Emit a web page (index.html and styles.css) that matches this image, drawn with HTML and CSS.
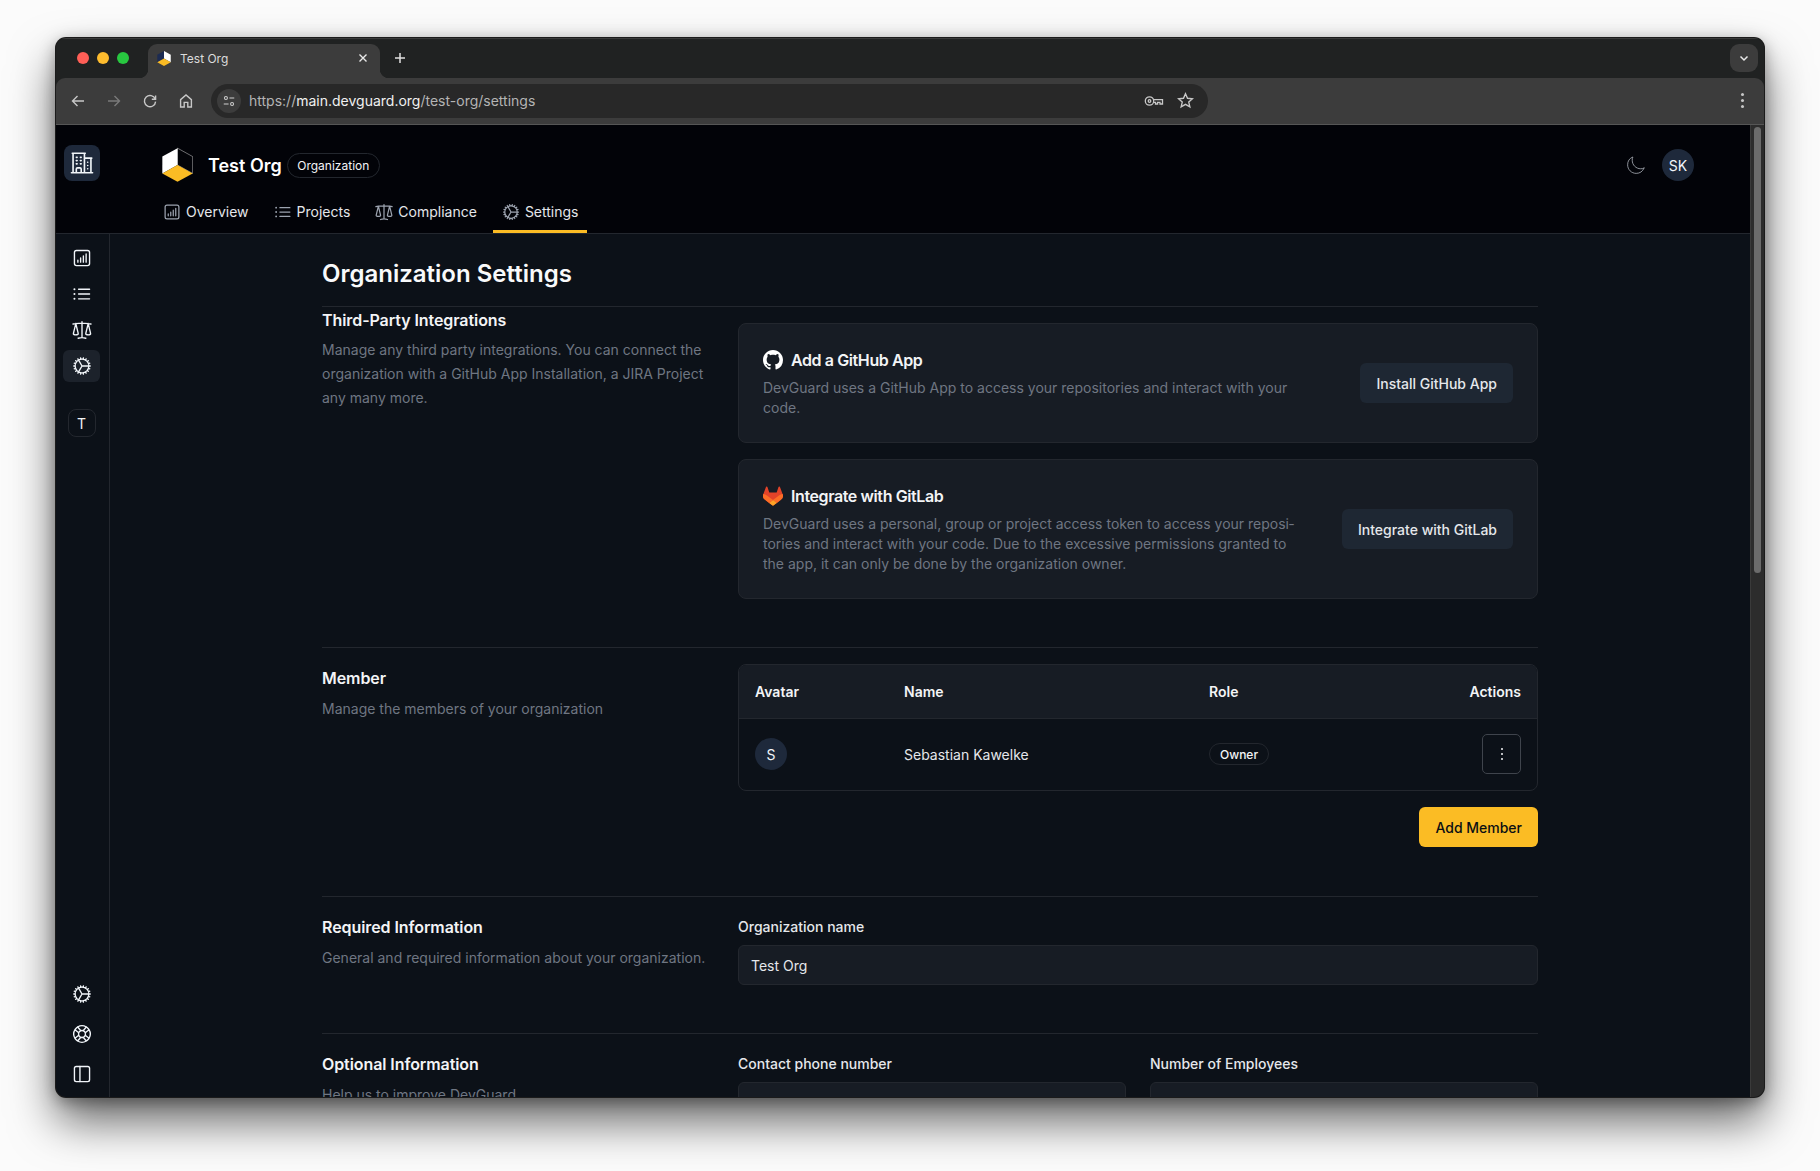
FILE: index.html
```html
<!DOCTYPE html>
<html lang="en">
<head>
<meta charset="utf-8">
<title>Test Org</title>
<link rel="stylesheet" href="styles.css">
</head>
<body>
<svg class="sprites" width="0" height="0" aria-hidden="true">
  <symbol id="i-chart" viewBox="0 0 24 24"><path d="M7.5 14.25v2.25m3-4.5v4.5m3-6.75v6.75m3-9v9M6 20.25h12A2.25 2.25 0 0 0 20.25 18V6A2.25 2.25 0 0 0 18 3.75H6A2.25 2.25 0 0 0 3.75 6v12A2.25 2.25 0 0 0 6 20.25Z"/></symbol>
  <symbol id="i-list" viewBox="0 0 24 24"><path d="M8.25 6.75h12M8.25 12h12m-12 5.25h12M3.75 6.75h.007v.008H3.75V6.75Zm.375 0a.375.375 0 1 1-.75 0 .375.375 0 0 1 .75 0ZM3.75 12h.007v.008H3.75V12Zm.375 0a.375.375 0 1 1-.75 0 .375.375 0 0 1 .75 0Zm-.375 5.25h.007v.008H3.75v-.008Zm.375 0a.375.375 0 1 1-.75 0 .375.375 0 0 1 .75 0Z"/></symbol>
  <symbol id="i-scale" viewBox="0 0 24 24"><path d="M12 3v17.25m0 0c-1.472 0-2.882.265-4.185.75M12 20.25c1.472 0 2.882.265 4.185.75M18.75 4.97A48.416 48.416 0 0 0 12 4.5c-2.291 0-4.545.16-6.75.47m13.5 0c1.01.143 2.01.317 3 .52m-3-.52 2.62 10.726c.122.499-.106 1.028-.589 1.202a5.988 5.988 0 0 1-2.031.352 5.988 5.988 0 0 1-2.031-.352c-.483-.174-.711-.703-.59-1.202L18.75 4.971Zm-16.5.52c.99-.203 1.99-.377 3-.52m0 0 2.62 10.726c.122.499-.106 1.028-.589 1.202a5.989 5.989 0 0 1-2.031.352 5.989 5.989 0 0 1-2.031-.352c-.483-.174-.711-.703-.59-1.202L5.25 4.971Z"/></symbol>
  <symbol id="i-cog" viewBox="0 0 24 24"><path d="M4.5 12a7.5 7.5 0 0 0 15 0m-15 0a7.5 7.5 0 1 1 15 0m-15 0H3m16.5 0H21m-1.5 0H12m-8.457 3.077 1.41-.513m14.095-5.13 1.41-.513M5.106 17.785l1.15-.964m11.49-9.642 1.149-.964M7.501 19.795l.75-1.3m7.5-12.99.75-1.3m-6.063 16.658.26-1.477m2.605-14.772.26-1.477m0 17.726-.26-1.477M10.698 4.614l-.26-1.477M16.5 19.794l-.75-1.299M7.5 4.205 12 12m6.894 5.785-1.149-.964M6.256 7.178l-1.15-.964m15.352 8.864-1.41-.513M4.954 9.435l-1.41-.514M12.002 12l-3.75 6.495"/></symbol>
  <symbol id="i-building" viewBox="0 0 24 24"><path d="M2.25 21h19.5m-18-18v18m10.5-18v18m6-13.5V21M6.75 6.75h.75m-.75 3h.75m-.75 3h.75m3-6h.75m-.75 3h.75m-.75 3h.75M6.75 21v-3.375c0-.621.504-1.125 1.125-1.125h2.25c.621 0 1.125.504 1.125 1.125V21M3 3h12m-.75 4.5H21m-3.75 3.75h.008v.008h-.008v-.008Zm0 3h.008v.008h-.008v-.008Zm0 3h.008v.008h-.008v-.008Z"/></symbol>
  <symbol id="i-moon" viewBox="0 0 24 24"><path d="M21.752 15.002A9.72 9.72 0 0 1 18 15.75c-5.385 0-9.75-4.365-9.75-9.75 0-1.33.266-2.597.748-3.752A9.753 9.753 0 0 0 3 11.25C3 16.635 7.365 21 12.75 21a9.753 9.753 0 0 0 9.002-5.998Z"/></symbol>
  <symbol id="i-buoy" viewBox="0 0 24 24"><path d="M16.712 4.33a9.027 9.027 0 0 1 1.652 1.306c.51.51.944 1.064 1.306 1.652M16.712 4.33l-3.448 4.138m3.448-4.138a9.014 9.014 0 0 0-9.424 0M19.67 7.288l-4.138 3.448m4.138-3.448a9.014 9.014 0 0 1 0 9.424m-4.138-5.976a3.736 3.736 0 0 0-.88-1.388 3.737 3.737 0 0 0-1.388-.88m2.268 2.268a3.765 3.765 0 0 1 0 2.528m-2.268-4.796a3.765 3.765 0 0 0-2.528 0m4.796 4.796c-.181.506-.475.982-.88 1.388a3.736 3.736 0 0 1-1.388.88m2.268-2.268 4.138 3.448m0 0a9.027 9.027 0 0 1-1.306 1.652c-.51.51-1.064.944-1.652 1.306m0 0-3.448-4.138m3.448 4.138a9.014 9.014 0 0 1-9.424 0m5.976-4.138a3.765 3.765 0 0 1-2.528 0m0 0a3.736 3.736 0 0 1-1.388-.88 3.737 3.737 0 0 1-.88-1.388m2.268 2.268L7.288 19.67m0 0a9.024 9.024 0 0 1-1.652-1.306 9.027 9.027 0 0 1-1.306-1.652m0 0 4.138-3.448M4.33 16.712a9.014 9.014 0 0 1 0-9.424m4.138 5.976a3.765 3.765 0 0 1 0-2.528m0 0c.181-.506.475-.982.88-1.388a3.736 3.736 0 0 1 1.388-.88m-2.268 2.268L4.33 7.288m6.406 1.18L7.288 4.33m0 0a9.024 9.024 0 0 0-1.652 1.306A9.025 9.025 0 0 0 4.33 7.288"/></symbol>
  <symbol id="i-panel" viewBox="0 0 24 24"><rect x="3.75" y="3.75" width="16.5" height="16.5" rx="2"/><path d="M9.75 3.75v16.5"/></symbol>
</svg>

<div class="window">
  <div class="tabstrip">
    <div class="lights"><span class="light red"></span><span class="light amber"></span><span class="light green"></span></div>
    <div class="tab">
      <svg class="favicon" viewBox="0 0 90 100"><polygon points="45,0 90,25 90,75 45,50" fill="#fff"/><polygon points="45,0 0,25 0,75 45,50" fill="#1c2b52"/><polygon points="45,50 0,75 45,100 90,75" fill="#fbbc24"/></svg>
      <span class="tab-title">Test Org</span>
      <svg class="tab-close" viewBox="0 0 10 10"><path d="M1.5 1.5l7 7m0-7l-7 7"/></svg>
    </div>
    <svg class="tab-new" viewBox="0 0 12 12"><path d="M6 1v10M1 6h10"/></svg>
    <div class="tab-list"><svg viewBox="0 0 10 10"><path d="M1.5 3.5L5 7l3.5-3.5"/></svg></div>
  </div>
  <div class="toolbar">
    <svg class="tb-icon" viewBox="0 0 16 16"><path d="M14 8H2.5M7.5 3L2.5 8l5 5"/></svg>
    <svg class="tb-icon dim" viewBox="0 0 16 16"><path d="M2 8h11.5M8.5 3l5 5-5 5"/></svg>
    <svg class="tb-icon" viewBox="0 0 16 16"><path d="M13.2 6A5.6 5.6 0 1 0 13.6 8.6M13.6 2.4V6.2H9.8"/></svg>
    <svg class="tb-icon" viewBox="0 0 16 16"><path d="M2.6 14V6.6L8 2l5.4 4.6V14H9.8V9.4H6.2V14Z"/></svg>
    <div class="omnibox">
      <span class="site-info"><svg viewBox="0 0 16 16"><circle cx="4.5" cy="4.5" r="1.7"/><path d="M8.5 4.5H14M2 11.5h5.5"/><circle cx="11.5" cy="11.5" r="1.7"/></svg></span>
      <span class="url"><span class="url-dim">https://</span>main.devguard.org<span class="url-dim">/test-org/settings</span></span>
      <svg class="omni-icon key" viewBox="0 0 20 14"><circle cx="5.5" cy="7" r="4.2"/><circle cx="5.5" cy="7" r="1.3"/><path d="M9.7 5.6H18.5V10H16V8.4H13.6V10H11.5V8.4H9.7"/></svg>
      <svg class="omni-icon star" viewBox="0 0 16 16"><path d="M8 1.6l1.9 4.3 4.7.45-3.55 3.1 1.05 4.6L8 11.65 3.9 14.05l1.05-4.6L1.4 6.35l4.7-.45Z"/></svg>
    </div>
    <div class="tb-menu"><span></span><span></span><span></span></div>
  </div>

  <div class="viewport">
    <div class="app">
      <header class="app-header">
        <div class="org-slot"><span class="org-switch"><svg class="ic ic-26"><use href="#i-building"/></svg></span></div>
        <div class="head-main">
          <div class="head-top">
            <svg class="logo" viewBox="-1 -1 92 102"><polygon points="45,0 90,25 90,75 45,50" fill="none" stroke="#d8d8d8" stroke-width="1.5"/><polygon points="45,0 0,25 0,75 45,50" fill="#fff"/><polygon points="45,50 0,75 45,100 90,75" fill="#fbbc24"/></svg>
            <span class="org-name">Test Org</span>
            <span class="pill pill-org">Organization</span>
            <div class="head-actions">
              <svg class="ic ic-moon"><use href="#i-moon"/></svg>
              <span class="avatar avatar-sk">SK</span>
            </div>
          </div>
          <nav class="tabs">
            <a class="nav-tab"><svg class="ic ic-20"><use href="#i-chart"/></svg>Overview</a>
            <a class="nav-tab"><svg class="ic ic-20"><use href="#i-list"/></svg>Projects</a>
            <a class="nav-tab"><svg class="ic ic-20"><use href="#i-scale"/></svg>Compliance</a>
            <a class="nav-tab active"><svg class="ic ic-20"><use href="#i-cog"/></svg>Settings</a>
          </nav>
        </div>
      </header>

      <div class="app-body">
        <aside class="sidebar">
          <div class="side-group">
            <span class="side-item"><svg class="ic ic-22"><use href="#i-chart"/></svg></span>
            <span class="side-item"><svg class="ic ic-22"><use href="#i-list"/></svg></span>
            <span class="side-item"><svg class="ic ic-22"><use href="#i-scale"/></svg></span>
            <span class="side-item active"><svg class="ic ic-22"><use href="#i-cog"/></svg></span>
            <span class="side-t">T</span>
          </div>
          <div class="side-group side-bottom">
            <span class="side-item"><svg class="ic ic-22"><use href="#i-cog"/></svg></span>
            <span class="side-item"><svg class="ic ic-22"><use href="#i-buoy"/></svg></span>
            <span class="side-item"><svg class="ic ic-22"><use href="#i-panel"/></svg></span>
          </div>
        </aside>

        <main class="content">
          <h1 class="page-title">Organization Settings</h1>

          <section class="section section-first">
            <div class="sec-info">
              <h2 class="sec-title">Third-Party Integrations</h2>
              <p class="sec-desc">Manage any third party integrations. You can connect the organization with a GitHub App Installation, a JIRA Project any many more.</p>
            </div>
            <div class="sec-body stack">
              <div class="card">
                <div class="card-text">
                  <h3 class="card-title"><svg class="brand" viewBox="0 0 16 16"><path fill="#fff" d="M8 0C3.58 0 0 3.58 0 8c0 3.54 2.29 6.53 5.47 7.59.4.07.55-.17.55-.38 0-.19-.01-.82-.01-1.49-2.01.37-2.53-.49-2.69-.94-.09-.23-.48-.94-.82-1.13-.28-.15-.68-.52-.01-.53.63-.01 1.08.58 1.23.82.72 1.21 1.87.87 2.33.66.07-.52.28-.87.51-1.07-1.78-.2-3.64-.89-3.64-3.95 0-.87.31-1.59.82-2.15-.08-.2-.36-1.02.08-2.12 0 0 .67-.21 2.2.82.64-.18 1.32-.27 2-.27.68 0 1.36.09 2 .27 1.53-1.04 2.2-.82 2.2-.82.44 1.1.16 1.92.08 2.12.51.56.82 1.27.82 2.15 0 3.07-1.87 3.75-3.65 3.95.29.25.54.73.54 1.48 0 1.07-.01 1.93-.01 2.2 0 .21.15.46.55.38A8.013 8.013 0 0016 8c0-4.42-3.58-8-8-8z"/></svg>Add a GitHub App</h3>
                  <p class="card-desc">DevGuard uses a GitHub App to access your repositories and interact with your code.</p>
                </div>
                <button class="btn btn-muted">Install GitHub App</button>
              </div>
              <div class="card">
                <div class="card-text">
                  <h3 class="card-title"><svg class="brand" viewBox="0 0 25 24"><path fill="#E24329" d="M24.507 9.5l-.034-.09L21.082.562a.896.896 0 00-1.694.091l-2.29 7.01H7.825L5.535.653a.898.898 0 00-1.694-.09L.451 9.411.416 9.5a6.297 6.297 0 002.09 7.278l.012.01.03.022 5.16 3.867 2.56 1.935 1.554 1.176a1.051 1.051 0 001.268 0l1.555-1.176 2.56-1.935 5.197-3.89.014-.01A6.297 6.297 0 0024.507 9.5z"/><path fill="#FC6D26" d="M24.507 9.5l-.034-.09a11.44 11.44 0 00-4.56 2.051l-7.447 5.632 4.742 3.584 5.197-3.89.014-.01A6.297 6.297 0 0024.507 9.5z"/><path fill="#FCA326" d="M7.707 20.677l2.56 1.935 1.555 1.176a1.051 1.051 0 001.268 0l1.555-1.176 2.56-1.935-4.743-3.584-4.755 3.584z"/><path fill="#FC6D26" d="M5.01 11.461a11.43 11.43 0 00-4.56-2.05L.416 9.5a6.297 6.297 0 002.09 7.278l.012.01.03.022 5.16 3.867 4.745-3.584-7.444-5.632z"/></svg>Integrate with GitLab</h3>
                  <p class="card-desc">DevGuard uses a personal, group or project access token to access your reposi&shy;tories and interact with your code. Due to the excessive permissions granted to the app, it can only be done by the organization owner.</p>
                </div>
                <button class="btn btn-muted">Integrate with GitLab</button>
              </div>
            </div>
          </section>

          <section class="section">
            <div class="sec-info">
              <h2 class="sec-title">Member</h2>
              <p class="sec-desc">Manage the members of your organization</p>
            </div>
            <div class="sec-body">
              <div class="table-wrap">
                <table class="members">
                  <colgroup><col class="col-avatar"><col class="col-name"><col class="col-role"><col class="col-actions"></colgroup>
                  <thead><tr><th>Avatar</th><th>Name</th><th>Role</th><th class="right">Actions</th></tr></thead>
                  <tbody><tr>
                    <td><span class="avatar avatar-s">S</span></td>
                    <td>Sebastian Kawelke</td>
                    <td><span class="pill pill-owner">Owner</span></td>
                    <td class="right"><button class="btn-dots"><svg viewBox="0 0 4 14"><circle cx="2" cy="2" r="1"/><circle cx="2" cy="7" r="1"/><circle cx="2" cy="12" r="1"/></svg></button></td>
                  </tr></tbody>
                </table>
              </div>
              <div class="row-end"><button class="btn btn-primary">Add Member</button></div>
            </div>
          </section>

          <section class="section">
            <div class="sec-info">
              <h2 class="sec-title">Required Information</h2>
              <p class="sec-desc">General and required information about your organization.</p>
            </div>
            <div class="sec-body">
              <label class="field"><span class="field-label">Organization name</span><span class="input">Test Org</span></label>
            </div>
          </section>

          <section class="section">
            <div class="sec-info">
              <h2 class="sec-title">Optional Information</h2>
              <p class="sec-desc">Help us to improve DevGuard.</p>
            </div>
            <div class="sec-body two-col">
              <label class="field"><span class="field-label">Contact phone number</span><span class="input placeholder">+49 123 456 789</span></label>
              <label class="field"><span class="field-label">Number of Employees</span><span class="input"></span></label>
            </div>
          </section>
        </main>
      </div>
    </div>
    <div class="scrollbar"><span class="thumb"></span></div>
  </div>
</div>
</body>
</html>
```
FILE: styles.css
```css
* { box-sizing: border-box; }
html, body { margin: 0; height: 100%; }
body {
  height: 1171px;
  overflow: hidden;
  padding: 38px 56px 74px;
  background: #fbfbfb;
  font-family: Inter, "Liberation Sans", sans-serif;
  font-size: 14px;
  color: #f3f4f6;
}
.sprites { position: absolute; }
h1, h2, h3, p { margin: 0; }
button { font: inherit; border: 0; }

.window {
  height: 1059px;
  display: flex;
  flex-direction: column;
  border-radius: 10px;
  overflow: hidden;
  background: #202222;
  box-shadow: 0 0 0 1px #1b1b1b, 0 24px 46px rgba(0,0,0,.6), 0 4px 16px rgba(0,0,0,.35);
}

/* browser chrome */
.tabstrip {
  height: 40px;
  flex: none;
  display: flex;
  align-items: flex-end;
  background: #202222;
  border-top: 1px solid #3a3a3a;
}
.lights { display: flex; gap: 8px; width: 92px; padding: 0 0 14px 21px; flex: none; }
.light { width: 12px; height: 12px; border-radius: 50%; }
.red { background: #ff5f57; }
.amber { background: #febc2e; }
.green { background: #28c840; }
.tab {
  position: relative;
  width: 232px;
  height: 34px;
  flex: none;
  display: flex;
  align-items: center;
  padding: 0 12px 6px 9px;
  background: #3c3c3c;
  border-radius: 9px 9px 0 0;
  font-size: 12px;
  color: #dcdcdc;
}
.tab::before, .tab::after {
  content: "";
  position: absolute;
  bottom: 0;
  width: 9px;
  height: 9px;
}
.tab::before { left: -9px; background: radial-gradient(circle at 0 0, transparent 9px, #3c3c3c 9.5px); }
.tab::after { right: -9px; background: radial-gradient(circle at 100% 0, transparent 9px, #3c3c3c 9.5px); }
.favicon { width: 14px; height: 15px; flex: none; }
.tab-title { margin-left: 9px; flex: 1; }
.tab-close { width: 10px; height: 10px; fill: none; stroke: #e8e8e8; stroke-width: 1.4; }
.tab-new { width: 12px; height: 12px; margin: 0 0 14px 14px; fill: none; stroke: #e0e0e0; stroke-width: 1.5; flex: none; }
.tab-list {
  margin: 0 6px 6px auto;
  width: 28px;
  height: 28px;
  display: flex;
  align-items: center;
  justify-content: center;
  background: #3c3c3c;
  border-radius: 9px;
}
.tab-list svg { width: 10px; height: 10px; fill: none; stroke: #e8e8e8; stroke-width: 1.5; }

.toolbar {
  height: 47px;
  flex: none;
  display: flex;
  align-items: center;
  padding: 0 0 1px 14px;
  background: #3c3c3c;
  border-bottom: 1px solid #565656;
  border-radius: 9px 9px 0 0;
}
.tb-icon { width: 16px; height: 16px; flex: none; margin-right: 20px; fill: none; stroke: #c7c7c7; stroke-width: 1.4; }
.tb-icon.dim { stroke: #7a7a7a; }
.tb-icon:nth-of-type(4) { margin-right: 17px; }
.omnibox {
  width: 997px;
  height: 34px;
  display: flex;
  align-items: center;
  background: #282828;
  border-radius: 17px;
  padding: 0 14px 0 6px;
}
.site-info {
  width: 24px;
  height: 24px;
  display: flex;
  align-items: center;
  justify-content: center;
  background: #3c3c3c;
  border-radius: 50%;
  flex: none;
}
.site-info svg { width: 14px; height: 14px; fill: none; stroke: #cfcfcf; stroke-width: 1.2; }
.url { margin-left: 8px; flex: 1; font-size: 14px; color: #f0f0f0; }
.url-dim { color: #b4b4b4; }
.omni-icon { fill: none; stroke: #c7c7c7; stroke-width: 1.3; flex: none; }
.key { width: 20px; height: 14px; margin-right: 13px; }
.star { width: 17px; height: 17px; }
.tb-menu { margin-left: auto; margin-right: 20px; display: flex; flex-direction: column; gap: 3px; }
.tb-menu span { width: 3px; height: 3px; border-radius: 50%; background: #c7c7c7; }

/* viewport */
.viewport { flex: 1; min-height: 0; display: flex; }
.scrollbar {
  width: 14px;
  flex: none;
  padding: 2px 3px;
  background: #2c2c2c;
  border-left: 1px solid #3a3a3a;
}
.thumb { display: block; height: 446px; border-radius: 4px; background: #6b6b6b; }
.app { flex: 1; min-width: 0; display: flex; flex-direction: column; background: #0c1118; }

.ic { fill: none; stroke: currentColor; stroke-width: 1.5; stroke-linecap: round; stroke-linejoin: round; flex: none; display: block; }
.ic-20 { width: 20px; height: 20px; }
.ic-22 { width: 22px; height: 22px; }
.ic-26 { width: 26px; height: 26px; }
.ic-moon { width: 21px; height: 21px; color: #a0a5ad; stroke-width: 1; }

.app-header {
  height: 109px;
  flex: none;
  display: flex;
  background: #020308;
  border-bottom: 1px solid #23272e;
}
.org-slot { width: 98px; flex: none; padding: 20px 0 0 8px; }
.org-switch {
  width: 36px;
  height: 36px;
  display: flex;
  align-items: center;
  justify-content: center;
  border-radius: 8px;
  background: #1e293b;
  color: #f1f5f9;
}
.head-main { flex: 1; min-width: 0; display: flex; flex-direction: column; justify-content: space-between; }
.head-top { display: flex; align-items: center; padding: 22px 56px 0 8px; }
.logo { width: 31px; height: 36px; flex: none; }
.org-name { margin-left: 15px; font-size: 18px; font-weight: 600; color: #fff; }
.pill {
  display: inline-flex;
  align-items: center;
  border: 1px solid #23272e;
  border-radius: 999px;
  font-size: 12px;
  color: #f3f4f6;
}
.pill-org { margin-left: 5px; height: 25px; padding: 0 9.5px; }
.head-actions { margin-left: auto; display: flex; align-items: center; gap: 16px; }
.avatar {
  display: flex;
  align-items: center;
  justify-content: center;
  width: 32px;
  height: 32px;
  border-radius: 50%;
  background: #1e293b;
  color: #f1f5f9;
}
.tabs { display: flex; gap: 7px; }
.nav-tab {
  height: 40px;
  padding: 0 9px 0 8px;
  display: flex;
  align-items: center;
  gap: 4px;
  color: #e5e7eb;
  border-bottom: 3px solid transparent;
}
.nav-tab .ic { color: #9ca3af; }
.nav-tab.active { border-bottom-color: #fbbc24; }

.app-body { flex: 1; min-height: 0; display: flex; overflow: hidden; }
.sidebar {
  width: 54px;
  flex: none;
  display: flex;
  flex-direction: column;
  justify-content: space-between;
  padding: 8px 2px 7px 0;
  border-right: 1px solid #23272e;
}
.side-group { display: flex; flex-direction: column; align-items: center; gap: 4px; }
.side-item { width: 37px; height: 32px; display: flex; align-items: center; justify-content: center; border-radius: 6px; color: #f1f5f9; }
.side-item.active { background: #1c222b; }
.side-bottom { gap: 8px; }
.side-t {
  width: 28px;
  height: 28px;
  margin-top: 23px;
  display: flex;
  align-items: center;
  justify-content: center;
  border: 1px solid #23272e;
  border-radius: 8px;
  font-size: 14px;
}

.content { flex: 1; min-width: 0; padding: 24px 212px 0 212px; overflow: hidden; }
.page-title { font-size: 24px; line-height: 32px; font-weight: 600; color: #f9fafb; padding-bottom: 16px; }
.section {
  display: grid;
  grid-template-columns: 1fr 800px;
  padding: 16px 0 48px;
  border-top: 1px solid #23272e;
}
.sec-info { padding: 2px 24px 0 0; }
.section-first .sec-info { margin-top: -17px; }
.sec-title { font-size: 16px; line-height: 24px; font-weight: 600; color: #f3f4f6; letter-spacing: -.08px; }
.sec-desc { margin-top: 7px; line-height: 24px; color: #6f7682; }
.section-first .sec-desc { margin-top: 6px; }
.stack { display: flex; flex-direction: column; gap: 16px; }
.card {
  display: flex;
  align-items: center;
  gap: 40px;
  padding: 24px;
  background: #171c24;
  border: 1px solid #23272e;
  border-radius: 8px;
}
.card-text { flex: 1; min-width: 0; }
.card-title { display: flex; align-items: center; gap: 8px; font-size: 16px; line-height: 24px; font-weight: 600; color: #f3f4f6; letter-spacing: -.4px; }
.brand { width: 20px; height: 20px; flex: none; }
.card-desc { margin-top: 6px; line-height: 20px; color: #6f7682; }
.btn { height: 40px; padding: 0 16px; border-radius: 6px; font-size: 14px; font-weight: 500; flex: none; }
.btn-muted { background: #1e2733; color: #e5e7eb; }
.btn-primary { background: #fbbc24; color: #0b0f14; }

.table-wrap { border: 1px solid #23272e; border-radius: 8px; overflow: hidden; }
.members { width: 100%; border-collapse: collapse; table-layout: fixed; }
.col-avatar { width: 149px; }
.col-name { width: 305px; }
.col-role { width: 160px; }
.members th { height: 53px; padding: 0 16px; text-align: left; font-weight: 600; background: #171c24; color: #f3f4f6; border-bottom: 1px solid #23272e; }
.members td { height: 72px; padding: 0 16px; color: #e5e7eb; }
.members .right { text-align: right; }
.avatar-s { font-size: 14px; }
.pill-owner { height: 22px; padding: 0 10px; font-weight: 500; }
.btn-dots {
  width: 39px;
  height: 40px;
  display: inline-flex;
  align-items: center;
  justify-content: center;
  vertical-align: middle;
  background: transparent;
  border: 1px solid #3f444c;
  border-radius: 5px;
}
.btn-dots svg { width: 4px; height: 14px; fill: #f3f4f6; }
.row-end { margin-top: 16px; padding-bottom: 1px; display: flex; justify-content: flex-end; }

.field { display: flex; flex-direction: column; gap: 8px; }
.field-label { padding-top: 4px; line-height: 20px; font-weight: 500; color: #e5e7eb; }
.input {
  height: 40px;
  display: flex;
  align-items: center;
  padding: 0 12px;
  background: #171c24;
  border: 1px solid #23272e;
  border-radius: 6px;
  color: #e5e7eb;
}
.input.placeholder { color: #4b5563; }
.two-col { display: grid; grid-template-columns: 1fr 1fr; gap: 24px; }
```
